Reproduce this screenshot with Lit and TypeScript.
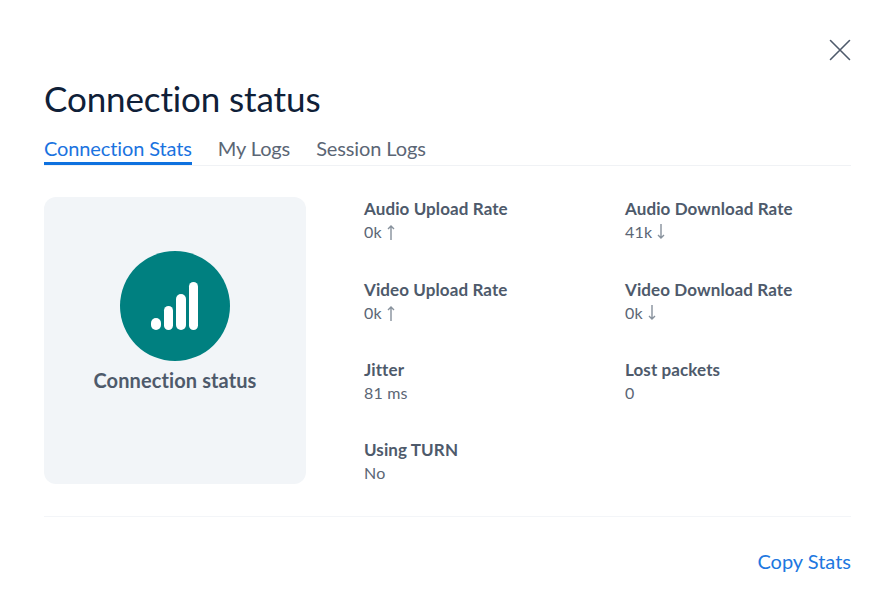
import { LitElement, css, html, svg } from 'lit';
import { customElement } from 'lit/decorators.js';

const stats = [
  { label: 'Audio Upload Rate', value: '0k', arrow: 'up' },
  { label: 'Audio Download Rate', value: '41k', arrow: 'down' },
  { label: 'Video Upload Rate', value: '0k', arrow: 'up' },
  { label: 'Video Download Rate', value: '0k', arrow: 'down' },
  { label: 'Jitter', value: '81 ms' },
  { label: 'Lost packets', value: '0' },
  { label: 'Using TURN', value: 'No' },
];

@customElement('app-root')
export class AppRoot extends LitElement {
  static get styles() {
    return css`
      :host {
        display: block;
        height: 602px;
        background: #fff;
        font-family: 'Lato', 'Noto Sans', sans-serif;
        font-variant-ligatures: none;
        color: #4e5a6b;
      }

      .dialog {
        display: flex;
        flex-direction: column;
        padding: 38px 41px 0 44px;
      }

      .close {
        align-self: flex-end;
        display: block;
        width: 24px;
        height: 24px;
        margin-right: -1px;
      }

      h1 {
        margin: 12px 0 0;
        font-size: 35px;
        line-height: 48px;
        font-weight: 400;
        letter-spacing: -0.12px;
        color: #0f2038;
      }

      .tabs {
        display: flex;
        gap: 26px;
        margin-top: 13px;
        border-bottom: 1px solid #f0f2f5;
      }

      .tab {
        font-size: 20px;
        line-height: 26px;
        height: 30px;
        letter-spacing: -0.12px;
        color: #5b6675;
      }

      .tab.active {
        color: #1a73e0;
        box-shadow: inset 0 -3px 0 #0e71df;
      }

      .content {
        display: flex;
        margin-top: 31px;
        padding-bottom: 32px;
        border-bottom: 1px solid #f3f5f8;
      }

      .panel {
        flex: none;
        width: 262px;
        height: 287px;
        border-radius: 12px;
        background: #f2f5f8;
        display: flex;
        flex-direction: column;
        align-items: center;
        padding-top: 54px;
        box-sizing: border-box;
      }

      .circle {
        width: 110px;
        height: 110px;
        border-radius: 50%;
        background: #008080;
        display: block;
      }

      .panel-label {
        margin-top: 6px;
        font-size: 20px;
        line-height: 26px;
        font-weight: 700;
        letter-spacing: 0.1px;
        color: #4e5a6b;
      }

      .grid {
        margin-left: 58px;
        flex: 1;
        display: grid;
        grid-template-columns: 261px 1fr;
        grid-template-rows: 81px 80px 80px auto;
      }

      .label {
        font-size: 17px;
        line-height: 24px;
        font-weight: 700;
        letter-spacing: 0.1px;
        color: #4e5a6b;
      }

      .value {
        display: flex;
        align-items: center;
        gap: 4px;
        font-size: 16px;
        line-height: 22px;
        letter-spacing: 0.2px;
        color: #5b6675;
      }

      .arrow {
        display: block;
      }

      .footer {
        display: flex;
        justify-content: flex-end;
        margin-top: 31px;
      }

      .copy {
        font-size: 20px;
        line-height: 26px;
        color: #2077e0;
      }
    `;
  }

  renderArrow(dir?: string) {
    if (!dir) return null;
    const d = dir === 'up' ? 'M5 16V2M2 5l3-3 3 3' : 'M5 0v14M2 11l3 3 3-3';
    return html`<svg class="arrow" width="10" height="16" viewBox="0 0 10 16" fill="none" stroke="#87919c" stroke-width="1.4">${svg`<path d=${d}></path>`}</svg>`;
  }

  render() {
    return html`
      <div class="dialog">
        <svg class="close" viewBox="0 0 24 24" fill="none" stroke="#4e5a6b" stroke-width="1.6" stroke-linecap="round">
          <path d="M2.5 2.5l19 19M21.5 2.5l-19 19"></path>
        </svg>
        <h1>Connection status</h1>
        <div class="tabs">
          <div class="tab active">Connection Stats</div>
          <div class="tab">My Logs</div>
          <div class="tab">Session Logs</div>
        </div>
        <div class="content">
          <div class="panel">
            <svg class="circle" viewBox="0 0 110 110">
              <g fill="#fff">
                <rect x="31" y="67" width="10" height="12" rx="5"></rect>
                <rect x="44" y="55" width="9" height="24" rx="4.5"></rect>
                <rect x="56" y="43" width="10" height="36" rx="5"></rect>
                <rect x="69" y="31" width="9" height="48" rx="4.5"></rect>
              </g>
            </svg>
            <div class="panel-label">Connection status</div>
          </div>
          <div class="grid">
            ${stats.map(
              (s) => html`
                <div>
                  <div class="label">${s.label}</div>
                  <div class="value">${s.value}${this.renderArrow(s.arrow)}</div>
                </div>
              `
            )}
          </div>
        </div>
        <div class="footer"><div class="copy">Copy Stats</div></div>
      </div>
    `;
  }
}
